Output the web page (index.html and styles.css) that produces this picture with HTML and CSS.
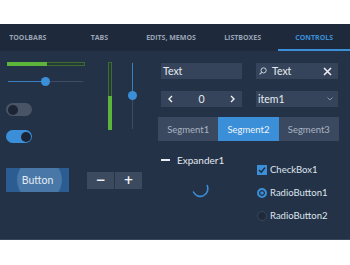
FILE: index.html
```html
<!DOCTYPE html>
<html lang="en">
<head>
    <meta charset="UTF-8">
    <meta name="viewport" content="width=device-width, initial-scale=1.0">
    <title>Controls</title>
    <link rel="stylesheet" href="styles.css">
</head>
<body>
    <div class="panel">
        <nav class="tabs">
            <span class="tab">Toolbars</span>
            <span class="tab">Tabs</span>
            <span class="tab">Edits, Memos</span>
            <span class="tab">Listboxes</span>
            <span class="tab active">Controls</span>
        </nav>

        <div class="content">
            <div class="left">
                <div class="top">
                    <div class="hcol">
                        <div class="hprogress"><div class="fill"></div></div>
                        <div class="hslider">
                            <span class="on-part"></span>
                            <span class="thumb"></span>
                            <span class="off-part"></span>
                        </div>
                        <div class="toggle"><span class="knob"></span></div>
                        <div class="toggle checked"><span class="knob"></span></div>
                    </div>
                    <div class="vprogress"><div class="fill"></div></div>
                    <div class="vslider">
                        <span class="on-part"></span>
                        <span class="thumb"></span>
                        <span class="off-part"></span>
                    </div>
                </div>

                <div class="bottom">
                    <button class="btn"><span class="ripple"></span><span class="label">Button</span></button>
                    <div class="stepper">
                        <button>&minus;</button>
                        <button>+</button>
                    </div>
                </div>
            </div>

            <div class="right">
                <div class="fields">
                    <div class="field"><span>Text</span></div>
                    <div class="field search">
                        <svg width="8" height="8" viewBox="0 0 8 8">
                            <circle cx="4.6" cy="3.4" r="2.6" fill="none" stroke="#c9d1dc" stroke-width="1"/>
                            <line x1="2.7" y1="5.3" x2="0.6" y2="7.4" stroke="#c9d1dc" stroke-width="1.1"/>
                        </svg>
                        <span class="grow">Text</span>
                        <svg width="9" height="9" viewBox="0 0 9 9">
                            <path d="M1 1 L8 8 M8 1 L1 8" stroke="#eef2f6" stroke-width="1.5"/>
                        </svg>
                    </div>
                    <div class="field numeric">
                        <svg width="5" height="8" viewBox="0 0 5 8"><path d="M4 1 L1 4 L4 7" fill="none" stroke="#eef2f6" stroke-width="1.4"/></svg>
                        <span>0</span>
                        <svg width="5" height="8" viewBox="0 0 5 8"><path d="M1 1 L4 4 L1 7" fill="none" stroke="#eef2f6" stroke-width="1.4"/></svg>
                    </div>
                    <div class="field combo">
                        <span class="grow">item1</span>
                        <svg width="6" height="4" viewBox="0 0 6 4"><path d="M0.5 0.5 L3 3 L5.5 0.5" fill="none" stroke="#8d98a8" stroke-width="1"/></svg>
                    </div>
                </div>

                <div class="segments">
                    <span class="segment">Segment1</span>
                    <span class="segment active">Segment2</span>
                    <span class="segment">Segment3</span>
                </div>

                <div class="lower">
                    <div class="expander">
                        <div class="expander-head">
                            <span class="dash"></span>
                            <span>Expander1</span>
                        </div>
                        <svg class="spinner" width="20" height="20" viewBox="0 0 20 20">
                            <path d="M3.5 14 A7.5 7.5 0 0 0 17.2 7.5" fill="none" stroke="#3a8fd8" stroke-width="1.6" stroke-linecap="round"/>
                        </svg>
                    </div>
                    <div class="checks">
                        <label class="check">
                            <span class="box">
                                <svg width="8" height="8" viewBox="0 0 8 8"><path d="M1 4 L3.2 6.2 L7 1.6" fill="none" stroke="#1d2839" stroke-width="1.4"/></svg>
                            </span>
                            CheckBox1
                        </label>
                        <label class="check">
                            <span class="radio selected"></span>
                            RadioButton1
                        </label>
                        <label class="check">
                            <span class="radio"></span>
                            RadioButton2
                        </label>
                    </div>
                </div>
            </div>
        </div>
    </div>
</body>
</html>
```

FILE: styles.css
```css
body {
    margin: 0;
    background-color: #ffffff;
    font-family: Lato, "Open Sans", sans-serif;
    color: #e2e8ef;
}
.panel {
    margin-top: 24px;
    height: 216px;
    box-sizing: border-box;
    background-color: #243248;
    border-bottom: 1px solid #3a475b;
    overflow: hidden;
}
.tabs {
    display: flex;
    height: 27px;
    margin-left: -8px;
    background-color: #1e293b;
}
.tab {
    width: 71.6px;
    flex: none;
    box-sizing: border-box;
    display: flex;
    align-items: center;
    justify-content: center;
    font-family: "Open Sans", sans-serif;
    font-size: 7px;
    font-weight: 700;
    text-transform: uppercase;
    color: #9aa4b4;
    border-bottom: 2px solid transparent;
    padding-top: 1px;
}
.tab.active {
    color: #3b8fd8;
    border-bottom-color: #3b8fd8;
}
.content {
    display: flex;
}
.left {
    width: 142px;
    box-sizing: border-box;
    padding-left: 6px;
}
.top {
    display: flex;
    align-items: flex-start;
    margin-top: 11px;
}
.hcol {
    width: 79px;
    display: flex;
    flex-direction: column;
}
.hprogress {
    margin-left: 1px;
    width: 78px;
    height: 4px;
    box-sizing: border-box;
    border: 1px solid #3c6c30;
    background-color: #26393a;
}
.hprogress .fill {
    margin: -1px;
    width: 40px;
    height: 4px;
    background-color: #5cb43a;
}
.hslider {
    display: flex;
    align-items: center;
    margin: 11px 0 0 2px;
    width: 75px;
    height: 9px;
}
.hslider .on-part {
    width: 33px;
    height: 1px;
    background-color: #3a7fc2;
}
.hslider .off-part {
    flex: 1;
    height: 1px;
    background-color: #3e4b60;
}
.thumb {
    width: 9px;
    height: 9px;
    flex: none;
    border-radius: 50%;
    background-color: #3a8fd8;
}
.toggle {
    width: 26px;
    height: 13px;
    box-sizing: border-box;
    margin-top: 17px;
    padding: 1.5px;
    border-radius: 7px;
    background-color: #4a5467;
    display: flex;
}
.toggle + .toggle {
    margin-top: 14px;
}
.toggle .knob {
    width: 10px;
    height: 10px;
    border-radius: 50%;
    background-color: #1c2535;
}
.toggle.checked {
    background-color: #3a8fd8;
    justify-content: flex-end;
}
.vprogress {
    margin-left: 23px;
    width: 4px;
    height: 68px;
    box-sizing: border-box;
    border: 1px solid #3c6c30;
    background-color: #26393a;
    display: flex;
    flex-direction: column;
    justify-content: flex-end;
}
.vprogress .fill {
    margin: -1px;
    height: 34px;
    background-color: #5cb43a;
}
.vslider {
    margin: 1px 0 0 16px;
    width: 9px;
    display: flex;
    flex-direction: column;
    align-items: center;
}
.vslider .on-part {
    width: 1px;
    height: 28px;
    background-color: #3a7fc2;
}
.vslider .off-part {
    width: 1px;
    height: 29px;
    background-color: #3e4b60;
}
.bottom {
    display: flex;
    align-items: center;
    margin-top: 25px;
}
.btn {
    position: relative;
    overflow: hidden;
    width: 64px;
    height: 24px;
    padding: 0;
    border: none;
    background-color: #2b5d92;
    font-family: inherit;
    font-size: 10.5px;
    color: #e4ebf3;
}
.btn .ripple {
    position: absolute;
    left: 11px;
    top: -10px;
    width: 45px;
    height: 44px;
    border-radius: 50%;
    background-color: rgba(140, 180, 220, 0.3);
}
.btn .label {
    position: relative;
}
.stepper {
    display: flex;
    gap: 1px;
    margin-left: 18px;
    background-color: #2a3648;
}
.stepper button {
    width: 27px;
    height: 17px;
    padding: 0;
    border: none;
    background-color: #3b4a5f;
    color: #eef2f6;
    font-family: "DejaVu Sans", sans-serif;
    font-size: 12px;
    font-weight: 700;
    line-height: 17px;
}
.right {
    margin-left: 16px;
    width: 181px;
}
.fields {
    display: grid;
    grid-template-columns: 81px 82px;
    column-gap: 14px;
    row-gap: 12px;
    margin-top: 12px;
    padding-left: 3px;
}
.field {
    height: 16px;
    display: flex;
    align-items: center;
    padding: 0 2px;
    background-color: #35445a;
    font-size: 10.5px;
    color: #e6ebf1;
}
.grow {
    flex: 1;
}
.search svg:first-child {
    margin: 0 5px 0 1px;
}
.search svg:last-child {
    margin-right: 4px;
}
.numeric {
    justify-content: space-between;
    padding: 0 7px;
}
.combo svg {
    margin-right: 3px;
}
.segments {
    display: flex;
    margin-top: 10px;
    height: 24px;
}
.segment {
    flex: 1;
    display: flex;
    align-items: center;
    justify-content: center;
    background-color: #3a4960;
    font-size: 9.5px;
    color: #a9b3c1;
}
.segment.active {
    background-color: #3a8fd8;
    color: #eef4fa;
}
.lower {
    display: flex;
    margin-top: 13px;
}
.expander {
    width: 99px;
    box-sizing: border-box;
    padding-left: 3px;
}
.expander-head {
    display: flex;
    align-items: center;
    font-size: 10px;
    color: #e2e8ef;
}
.dash {
    width: 9px;
    height: 1.5px;
    margin-right: 7px;
    background-color: #e8edf3;
}
.spinner {
    display: block;
    margin: 12px 0 0 29px;
}
.checks {
    display: flex;
    flex-direction: column;
    gap: 10px;
    padding-top: 9px;
}
.check {
    display: flex;
    align-items: center;
    height: 13px;
    font-size: 9.5px;
    color: #dde4ec;
}
.box {
    width: 10px;
    height: 10px;
    margin-right: 3px;
    background-color: #3a8fd8;
    display: flex;
    align-items: center;
    justify-content: center;
}
.radio {
    width: 10px;
    height: 10px;
    box-sizing: border-box;
    margin-right: 3px;
    border-radius: 50%;
    border: 1px solid #39465a;
    background-color: #1f2a3c;
}
.radio.selected {
    border: 2.5px solid #3a8fd8;
    box-shadow: inset 0 0 0 1.2px #1f2a3c;
    background-color: #3a8fd8;
}
```
